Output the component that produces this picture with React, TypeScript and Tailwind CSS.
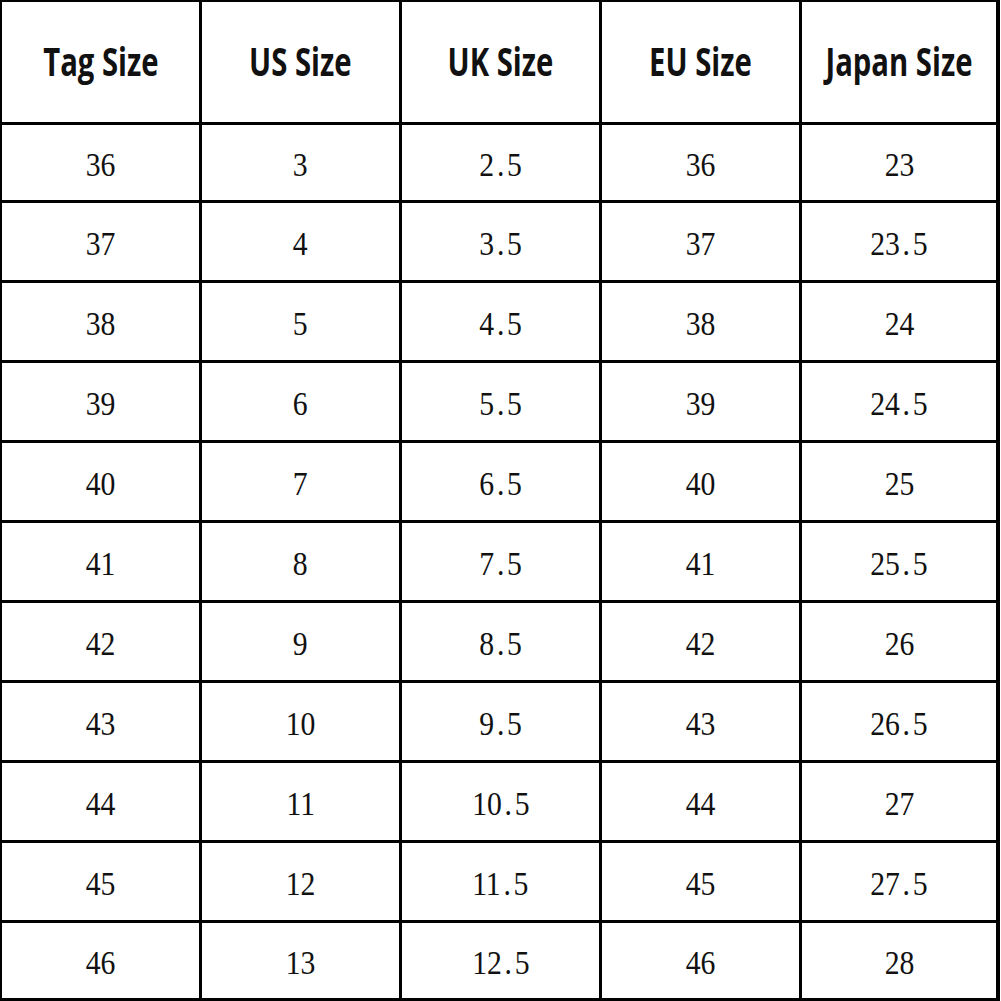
import React from 'react';

const headers = ['Tag Size', 'US Size', 'UK Size', 'EU Size', 'Japan Size'];

const rows = [
  ['36', '3', '2.5', '36', '23'],
  ['37', '4', '3.5', '37', '23.5'],
  ['38', '5', '4.5', '38', '24'],
  ['39', '6', '5.5', '39', '24.5'],
  ['40', '7', '6.5', '40', '25'],
  ['41', '8', '7.5', '41', '25.5'],
  ['42', '9', '8.5', '42', '26'],
  ['43', '10', '9.5', '43', '26.5'],
  ['44', '11', '10.5', '44', '27'],
  ['45', '12', '11.5', '45', '27.5'],
  ['46', '13', '12.5', '46', '28'],
];

// the period in the reference sits in a wide cell, like a CJK half-width font
const Num: React.FC<{ value: string }> = ({ value }) => {
  const parts = value.split('.');
  if (parts.length === 1) return <>{value}</>;
  return (
    <>
      {parts[0]}
      <span className="mx-[3px]">.</span>
      {parts[1]}
    </>
  );
};

const App: React.FC = () => {
  return (
    <div className="w-[1001px] h-[1001px] bg-white">
      <div className="grid grid-cols-[197px_197px_197px_197px_194px] grid-rows-[120px_75px_77px_77px_77px_77px_77px_77px_77px_77px_77px_75px] gap-[3px] bg-black pt-[2px] pl-[2px] pr-[4px] pb-[3px] w-[1000px]">
        {headers.map((h) => (
          <div key={h} className="bg-white flex items-center justify-center">
            <span className="inline-block scale-x-[0.75] whitespace-nowrap text-[39px] font-bold text-[#111] font-['Open_Sans',sans-serif] leading-none pb-[4px]">
              {h}
            </span>
          </div>
        ))}
        {rows.map((r, i) =>
          r.map((c, j) => (
            <div key={`${i}-${j}`} className="bg-white flex items-center justify-center">
              <span className="inline-block scale-x-[0.9] text-[33px] text-[#111] font-['Liberation_Serif',serif] leading-none pt-[6px]">
                <Num value={c} />
              </span>
            </div>
          ))
        )}
      </div>
    </div>
  );
};

export default App;
